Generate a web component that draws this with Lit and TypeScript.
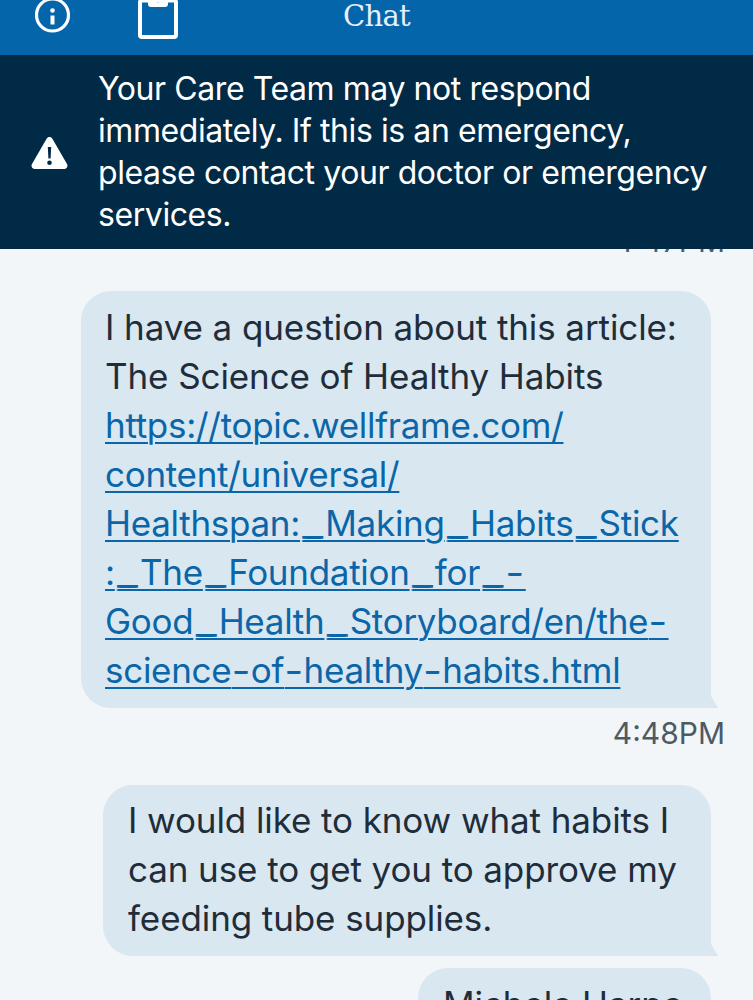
import {LitElement, html, css} from 'lit';
import {customElement} from 'lit/decorators.js';

const LINK_LINES = [
  'https://topic.wellframe.com/',
  'content/universal/',
  'Healthspan:_Making_Habits_Stick',
  ':_The_Foundation_for_-',
  'Good_Health_Storyboard/en/the-',
  'science-of-healthy-habits.html',
];

@customElement('app-root')
export class AppRoot extends LitElement {
  static styles = css`
    :host {
      display: block;
      width: 753px;
      height: 1000px;
      overflow: hidden;
      background: #f2f6f9;
      font-family: Inter, 'Liberation Sans', sans-serif;
    }

    .header {
      display: grid;
      grid-template-columns: 1fr auto 1fr;
      height: 55px;
      background: #0565ab;
      color: #fff;
    }

    .headerIcons {
      display: flex;
      align-items: flex-start;
      gap: 67px;
      padding-left: 35px;
    }

    .infoIcon {
      width: 36px;
      height: 36px;
      margin-top: -3px;
    }

    .clipIcon {
      width: 40px;
      height: 40px;
    }

    .title {
      font-family: 'DejaVu Serif', 'Liberation Serif', serif;
      font-size: 29px;
      font-weight: 300;
      letter-spacing: -0.7px;
      line-height: 32px;
      color: #e6f0f7;
    }

    .banner {
      position: relative;
      z-index: 1;
      display: flex;
      align-items: center;
      gap: 30px;
      height: 194px;
      box-sizing: border-box;
      padding: 0 20px 0 31px;
      background: #012a46;
      color: #fff;
      font-size: 32px;
      letter-spacing: -0.42px;
      line-height: 42px;
    }

    .banner svg {
      flex: none;
      width: 37px;
      height: 34px;
      margin-top: 2px;
    }

    .thread {
      display: flex;
      flex-direction: column;
      align-items: flex-end;
      padding-right: 28px;
    }

    .time {
      font-size: 30px;
      line-height: 36px;
      color: #4d5a64;
    }

    .time.clipped {
      margin-top: -26px;
      margin-bottom: 32px;
    }

    .time.after {
      margin-top: 7px;
      margin-bottom: 34px;
    }

    .bubble {
      position: relative;
      box-sizing: border-box;
      margin-right: 14px;
      background: #d9e7f1;
      border-radius: 30px 30px 0 30px;
      color: #1f2d3a;
      font-size: 35px;
      letter-spacing: -0.1px;
      line-height: 49px;
    }

    .bubble::after {
      content: '';
      position: absolute;
      right: -7px;
      bottom: 0;
      width: 7px;
      height: 12px;
      background: #d9e7f1;
      clip-path: polygon(0 0, 100% 100%, 0 100%);
    }

    .article {
      width: 630px;
      height: 417px;
      padding: 12px 20px 0 24px;
    }

    .article a {
      display: block;
      color: #0a66a8;
      letter-spacing: -0.29px;
      white-space: nowrap;
      text-decoration: underline;
      text-decoration-thickness: 2px;
      text-underline-offset: 4px;
    }

    .under {
      padding-left: 4.800px;
      letter-spacing: 4.500px;
      text-shadow: 2.500px 0 currentColor, -2.500px 0 currentColor;
    }

    .hyphen {
      padding-left: 1.500px;
      letter-spacing: 1.800px;
      text-shadow: 1px 0 currentColor, -1px 0 currentColor;
    }

    .question {
      width: 608px;
      height: 171px;
      padding: 11px 20px 0 25px;
    }

    .name {
      width: 293px;
      height: 60px;
      margin-top: 12px;
      padding: 12px 20px 0 25px;
      border-radius: 30px 30px 0 0;
      white-space: nowrap;
    }

    .name::after {
      display: none;
    }
  `;

  // the link font in the screenshot has much wider _ and - than Inter
  renderLinkLine(line: string) {
    return line.split(/([_-])/).map((part) => {
      if (part === '_') return html`<span class="under">_</span>`;
      if (part === '-') return html`<span class="hyphen">-</span>`;
      return part;
    });
  }

  render() {
    return html`
      <div class="header">
        <div class="headerIcons">
          <svg class="infoIcon" viewBox="0 0 36 36" fill="none" stroke="#fff">
            <circle cx="17.5" cy="18" r="16" stroke-width="3.2" />
            <circle cx="17.500" cy="13.500" r="2.300" fill="#fff" stroke="none" />
            <path d="M17.500 18.500v9" stroke-width="4" />
          </svg>
          <svg class="clipIcon" viewBox="0 0 40 40" fill="none" stroke="#fff">
            <rect x="2" y="0.500" width="36" height="36.500" rx="2" stroke-width="4" />
            <path
              d="M10 0h7.500a2.500 2.500 0 0 0 5 0H30v4a3 3 0 0 1-3 3H13a3 3 0 0 1-3-3z"
              fill="#fff"
              stroke="none"
            />
          </svg>
        </div>
        <div class="title">Chat</div>
        <div></div>
      </div>
      <div class="banner">
        <svg viewBox="0 0 37 34">
          <path
            fill="#fff"
            fill-rule="evenodd"
            d="M18.500 1c1.200 0 2.200.6 2.900 1.700l14.600 25.400c1.300 2.300-.2 4.900-2.900 4.900H3.900C1.200 33-.3 30.400 1 28.100L15.600 2.700C16.300 1.600 17.300 1 18.500 1zM16.800 11l.6 11.500h2.200l.6-11.500zM18.500 24.500a2.300 2.300 0 1 0 0 4.600 2.300 2.300 0 0 0 0-4.600z"
          />
        </svg>
        <div>
          Your Care Team may not respond immediately. If this is an emergency,
          please contact your doctor or emergency services.
        </div>
      </div>
      <div class="thread">
        <div class="time clipped">4:47PM</div>
        <div class="bubble article">
          I have a question about this article:<br />
          The Science of Healthy Habits
          <a href="#">${LINK_LINES.map(
            (line) => html`${this.renderLinkLine(line)}<br />`
          )}</a>
        </div>
        <div class="time after">4:48PM</div>
        <div class="bubble question">
          I would like to know what habits I can use to get you to approve my
          feeding tube supplies.
        </div>
        <div class="bubble name">Michele Harpe</div>
      </div>
    `;
  }
}
